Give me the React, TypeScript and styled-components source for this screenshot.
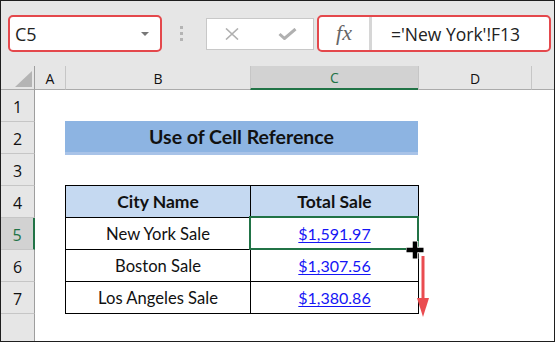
import styled, { createGlobalStyle } from 'styled-components';

const GlobalStyle = createGlobalStyle`
  html, body { margin: 0; padding: 0; background: #fff; }
  * { box-sizing: border-box; }
`;

const UI_FONT = `"Open Sans", "Noto Sans", sans-serif`;
const CELL_FONT = `Lato, "Liberation Sans", sans-serif`;
const GREEN = '#217346';
const RED = '#e4484c';

const COLUMNS = ['A', 'B', 'C', 'D'];
const ROWS = [1, 2, 3, 4, 5, 6, 7];

const SALES = [
	{ city: 'New York Sale', total: '$1,591.97', active: true },
	{ city: 'Boston Sale', total: '$1,307.56' },
	{ city: 'Los Angeles Sale', total: '$1,380.86' },
];

const Frame = styled.div`
	width: 555px;
	height: 342px;
	border: 1px solid #1e1e1e;
	display: flex;
	flex-direction: column;
	overflow: hidden;
	background: #fff;
`;

const Toolbar = styled.div`
	height: 65px;
	flex: none;
	background: #e6e6e6;
	display: flex;
	align-items: center;
	padding-left: 7px;
	font-family: ${UI_FONT};
`;

const NameBox = styled.div`
	width: 154px;
	height: 37px;
	border: 2px solid ${RED};
	border-radius: 5px;
	background: #fff;
	display: flex;
	align-items: center;
	justify-content: space-between;
	padding: 0 11px 0 5px;
	font-size: 18px;
	color: #222;
`;

const DropArrow = styled.span`
	width: 0;
	height: 0;
	border-left: 4px solid transparent;
	border-right: 4px solid transparent;
	border-top: 4px solid #777;
`;

const Dots = styled.div`
	margin-left: 18px;
	display: flex;
	flex-direction: column;
	gap: 3px;
	span {
		width: 3px;
		height: 3px;
		background: #b4b4b4;
	}
`;

const EditBox = styled.div`
	margin-left: 23px;
	width: 108px;
	height: 32px;
	border: 1px solid #c8c8c8;
	background: #fff;
	display: flex;
	align-items: center;
	padding-left: 18px;
	gap: 39px;
`;

const FormulaBox = styled.div`
	margin-left: 3px;
	width: 234px;
	height: 37px;
	border: 2px solid ${RED};
	border-radius: 5px;
	background: #fff;
	display: flex;
	align-items: stretch;
	overflow: hidden;
`;

const FxCell = styled.div`
	width: 53px;
	border-right: 3px solid #d6d6d6;
	display: flex;
	align-items: center;
	justify-content: center;
	font-family: 'Liberation Serif', serif;
	font-style: italic;
	font-size: 22px;
	color: #666;
	padding-bottom: 2px;
`;

const FormulaText = styled.div`
	flex: 1;
	display: flex;
	align-items: center;
	padding-left: 19px;
	font-size: 17.5px;
	color: #222;
	white-space: nowrap;
`;

const Sheet = styled.div`
	flex: 1;
	display: grid;
	grid-template-columns: 34px 30px 185px 168px 113px 1fr;
	grid-template-rows: 24px repeat(7, 32px) 1fr;
	font-family: ${UI_FONT};
`;

const Corner = styled.div`
	background: #e6e6e6;
	border-right: 1px solid #9e9e9e;
	border-bottom: 1px solid #ababab;
	display: flex;
	align-items: flex-end;
	justify-content: flex-end;
	padding: 0 2px 2px 0;
`;

const ColHead = styled.div<{ $selected?: boolean; $first?: boolean }>`
	background: ${({ $selected }) => ($selected ? '#d2d2d2' : '#e6e6e6')};
	color: ${({ $selected }) => ($selected ? GREEN : '#111')};
	border-left: ${({ $first }) => ($first ? 'none' : '1px solid #c6c6c6')};
	border-bottom: ${({ $selected }) => ($selected ? `2px solid ${GREEN}` : '1px solid #ababab')};
	display: flex;
	align-items: center;
	justify-content: center;
	font-size: 14px;
	padding-top: 1px;
`;

const RowHead = styled.div<{ $selected?: boolean; $last?: boolean }>`
	grid-column: 1;
	background: ${({ $selected }) => ($selected ? '#d2d2d2' : '#e6e6e6')};
	color: ${({ $selected }) => ($selected ? GREEN : '#111')};
	border-right: ${({ $selected }) => ($selected ? `2px solid ${GREEN}` : '1px solid #9e9e9e')};
	border-bottom: ${({ $last }) => ($last ? 'none' : '1px solid #c6c6c6')};
	display: flex;
	align-items: center;
	justify-content: center;
	font-size: 16px;
	padding-top: 2px;
`;

const TitleBand = styled.div`
	grid-column: 3 / 5;
	grid-row: 3;
	align-self: start;
	margin-top: -1px;
	height: 34px;
	background: #8db4e2;
	border-bottom: 3px solid #a8c3e8;
	display: flex;
	align-items: center;
	justify-content: center;
	font-family: ${CELL_FONT};
	font-weight: 700;
	font-size: 19.5px;
	color: #111;
`;

const Table = styled.div`
	grid-column: 3 / 5;
	grid-row: 5 / span 4;
	align-self: start;
	margin: -1px -1px 0 0;
	display: grid;
	grid-template-columns: 185px 168px;
	border-left: 1px solid #000;
	border-top: 1px solid #000;
	font-family: ${CELL_FONT};
	font-size: 16.6px;
`;

const Cell = styled.div<{ $head?: boolean }>`
	position: relative;
	height: 32px;
	border-right: 1px solid #000;
	border-bottom: 1px solid #000;
	display: flex;
	align-items: center;
	justify-content: center;
	background: ${({ $head }) => ($head ? '#c5d9f1' : '#fff')};
	font-weight: ${({ $head }) => ($head ? 700 : 400)};
	font-size: ${({ $head }) => ($head ? '17.5px' : 'inherit')};
	color: #111;
`;

const Link = styled.span`
	color: #1515f5;
	font-size: 16px;
	text-decoration: underline;
	text-underline-offset: 2px;
`;

const Selection = styled.div`
	position: absolute;
	left: -2px;
	top: -2px;
	right: -1px;
	bottom: -1px;
	border: 2px solid ${GREEN};
	z-index: 2;
	pointer-events: none;
`;

const Cursor = styled.svg`
	position: absolute;
	right: -7px;
	bottom: -11px;
	z-index: 3;
`;

const DragArrow = styled.svg`
	position: absolute;
	right: -11px;
	top: 38px;
	z-index: 3;
`;

const XIcon = () => (
	<svg width="14" height="12" viewBox="0 0 14 12">
		<path d="M1 0.5 L13 11.5 M13 0.5 L1 11.5" stroke="#b0b0b0" strokeWidth="1.6" fill="none" />
	</svg>
);

const CheckIcon = () => (
	<svg width="19" height="12" viewBox="0 0 19 12">
		<path d="M1.5 6 L6.5 10.5 L17.5 1" stroke="#b0b0b0" strokeWidth="3" fill="none" />
	</svg>
);

const CornerTriangle = () => (
	<svg width="17" height="16" viewBox="0 0 17 16">
		<polygon points="17,0 17,16 0,16" fill="#b4b4b4" />
	</svg>
);

export default function App() {
	return (
		<>
			<GlobalStyle />
			<Frame>
				<Toolbar>
					<NameBox>
						<span>C5</span>
						<DropArrow />
					</NameBox>
					<Dots>
						<span />
						<span />
						<span />
					</Dots>
					<EditBox>
						<XIcon />
						<CheckIcon />
					</EditBox>
					<FormulaBox>
						<FxCell>fx</FxCell>
						<FormulaText>='New York'!F13</FormulaText>
					</FormulaBox>
				</Toolbar>
				<Sheet>
					<Corner>
						<CornerTriangle />
					</Corner>
					{COLUMNS.map((c, i) => (
						<ColHead key={c} $first={i === 0} $selected={c === 'C'}>
							{c}
						</ColHead>
					))}
					<ColHead />
					{ROWS.map((r) => (
						<RowHead key={r} style={{ gridRow: r + 1 }} $selected={r === 5}>
							{r}
						</RowHead>
					))}
					<RowHead style={{ gridRow: 9 }} $last />
					<TitleBand>Use of Cell Reference</TitleBand>
					<Table>
						<Cell $head>City Name</Cell>
						<Cell $head>Total Sale</Cell>
						{SALES.map((s) => (
							<>
								<Cell key={s.city}>{s.city}</Cell>
								<Cell key={s.total}>
									<Link>{s.total}</Link>
									{s.active && (
										<>
											<Selection />
											<Cursor width="20" height="20" viewBox="0 0 20 20">
												<path
													d="M10 1 V19 M1 10 H19"
													stroke="#fff"
													strokeWidth="6.5"
													fill="none"
												/>
												<path
													d="M10 1.5 V18.5 M1.5 10 H18.5"
													stroke="#000"
													strokeWidth="4.5"
													fill="none"
												/>
											</Cursor>
											<DragArrow width="12" height="61" viewBox="0 0 12 61">
												<rect x="4.5" y="0" width="3" height="45" fill="#ea4c50" />
												<polygon points="0,42 12,42 6,61" fill="#ea4c50" />
											</DragArrow>
										</>
									)}
								</Cell>
							</>
						))}
					</Table>
				</Sheet>
			</Frame>
		</>
	);
}
